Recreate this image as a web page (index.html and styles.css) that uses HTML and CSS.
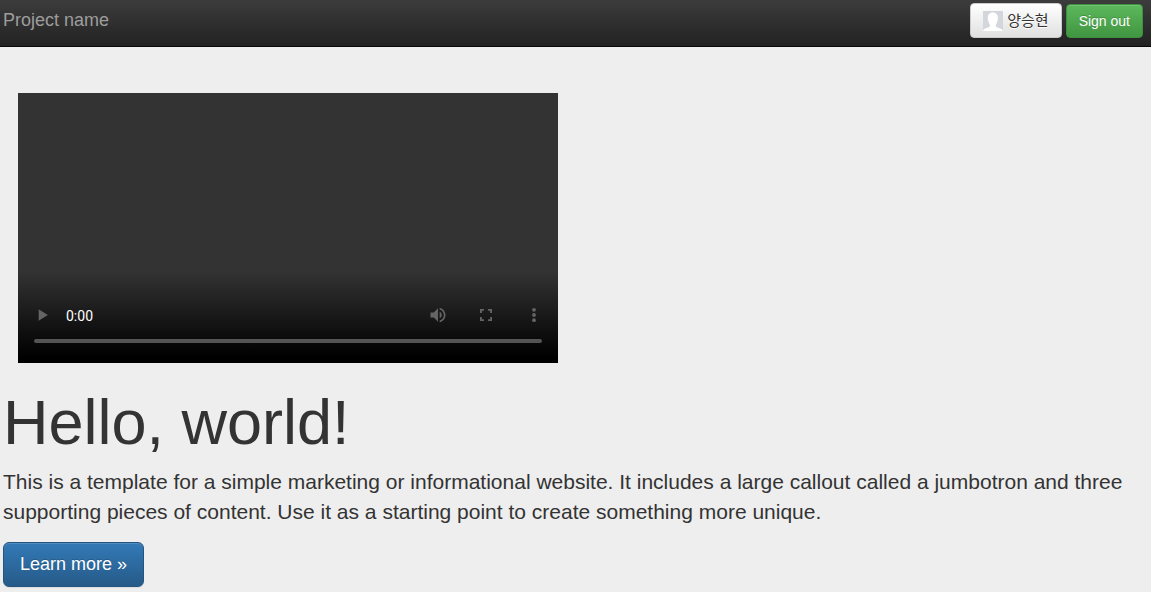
FILE: index.html
```html
<!DOCTYPE html>
<html lang="en">
<head>
<meta charset="utf-8">
<title>Project name</title>
<link rel="stylesheet" href="styles.css">
</head>
<body>
<nav class="navbar">
  <a class="brand" href="#">Project name</a>
  <div class="account">
    <button class="btn btn-user" type="button">
      <svg class="avatar" viewBox="0 0 20 20" aria-hidden="true">
        <rect width="20" height="20" fill="#d3d6db"/>
        <path fill="#fff" d="M0 20c.3-1.500 1.200-2.200 3-2.700 1.700-.5 3.200-.9 3.700-1.700.4-.7.3-1.500 0-2.200-.8-1-1.200-2.100-1.300-3.400C4.800 9.500 4.500 8 4.900 7.300 4.500 3.800 6.200 1.400 9.800 1.400s5.400 2.400 5 5.900c.4.700.1 2.200-.5 2.700-.1 1.300-.5 2.400-1.300 3.400-.3.700-.4 1.500 0 2.200.5.800 2 1.200 3.700 1.700 1.800.5 2.900 1.200 3.200 2.700z"/>
      </svg>
      <span class="user-name" lang="ko">양승현</span>
    </button>
    <button class="btn btn-success" type="button">Sign out</button>
  </div>
</nav>
<main class="jumbotron">
  <section class="player" aria-label="Video player">
    <div class="controls">
      <button class="control" type="button" aria-label="Play">
        <svg viewBox="0 0 24 24"><path d="M8 5v14l11-7z"/></svg>
      </button>
      <span class="time">0:00</span>
      <button class="control" type="button" aria-label="Mute">
        <svg viewBox="0 0 24 24"><path d="M3 9v6h4l5 5V4L7 9H3zm13.500 3c0-1.770-1.020-3.290-2.500-4.030v8.050c1.480-.73 2.500-2.250 2.500-4.020zM14 3.230v2.060c2.890.86 5 3.540 5 6.710s-2.110 5.850-5 6.710v2.060c4.010-.91 7-4.490 7-8.770s-2.990-7.860-7-8.770z"/></svg>
      </button>
      <button class="control" type="button" aria-label="Full screen">
        <svg viewBox="0 0 24 24"><path d="M7 14.500H4.800v4.700h4.700V17H7zM4.800 9.500H7V7h2.500V4.800H4.800zM17 17h-2.500v2.200h4.700v-4.700H17zM14.500 4.800V7H17v2.500h2.200V4.800z"/></svg>
      </button>
      <button class="control" type="button" aria-label="More options">
        <svg viewBox="0 0 24 24"><circle cx="12" cy="5.800" r="2.300"/><circle cx="12" cy="12" r="2.300"/><circle cx="12" cy="18.200" r="2.300"/></svg>
      </button>
    </div>
    <input class="timeline" type="range" min="0" max="100" value="0" disabled aria-label="Seek">
  </section>
  <h1 class="title">Hello, world!</h1>
  <p class="lead">This is a template for a simple marketing or informational website. It includes a large callout called a jumbotron and three supporting pieces of content. Use it as a starting point to create something more unique.</p>
  <a class="btn btn-primary" href="#">Learn more »</a>
</main>
</body>
</html>
```
FILE: styles.css
```css
* {
  box-sizing: border-box;
}

html {
  background: #eee;
}

body {
  margin: 0;
  font: 14px/20px "Liberation Sans", Arial, "Noto Sans CJK KR", sans-serif;
  color: #333;
}

.navbar {
  display: flex;
  justify-content: space-between;
  align-items: flex-start;
  padding: 3px 8px 8px 3px;
  border-bottom: 1px solid #080808;
  background: linear-gradient(#3c3c3c, #222);
}

.brand {
  padding-top: 7px;
  font-size: 18px;
  color: #9d9d9d;
  text-decoration: none;
}

.account {
  display: flex;
  align-items: flex-end;
  gap: 4px;
}

.btn {
  display: inline-flex;
  align-items: center;
  border: 1px solid;
  border-radius: 4px;
  padding: 6px 12px;
  font: inherit;
  color: #fff;
  text-decoration: none;
  text-shadow: 0 -1px 0 rgba(0, 0, 0, 0.2);
  box-shadow: inset 0 1px 0 rgba(255, 255, 255, 0.15), 0 1px 1px rgba(0, 0, 0, 0.075);
  cursor: pointer;
}

.btn-user {
  gap: 4px;
  height: 35px;
  border-color: #ccc;
  background: linear-gradient(#fff, #e0e0e0);
  color: #333;
  text-shadow: 0 1px 0 #fff;
}

.avatar {
  width: 20px;
  height: 20px;
}

.user-name {
  padding-bottom: 2px;
  font-family: "Noto Sans CJK KR", sans-serif;
  font-size: 15px;
  font-weight: 400;
}

.btn-success {
  height: 34px;
  border-color: #3e8f3e;
  background: linear-gradient(#5cb85c, #419641);
}

.btn-primary {
  padding: 10px 16px;
  border-color: #245580;
  border-radius: 6px;
  background: linear-gradient(#337ab7, #265a88);
  font-size: 18px;
  line-height: 23px;
}

.jumbotron {
  padding: 46px 3px 5px;
}

.player {
  display: flex;
  flex-direction: column;
  justify-content: flex-end;
  width: 100%;
  max-width: 540px;
  aspect-ratio: 2 / 1;
  margin-left: 15px;
  padding-bottom: 20px;
  background: linear-gradient(#333 66%, #000 98%);
}

.controls {
  display: flex;
  align-items: center;
}

.control {
  display: flex;
  align-items: center;
  justify-content: center;
  width: 48px;
  height: 48px;
  padding: 0;
  border: 0;
  background: none;
}

.control svg {
  width: 20px;
  height: 20px;
  fill: #646464;
}

.time {
  flex: 1;
  padding-top: 2px;
  font-family: Roboto, sans-serif;
  color: #fff;
}

.timeline {
  appearance: none;
  height: 4px;
  margin: 0 16px;
  border-radius: 2px;
  background: #555;
}

.timeline::-webkit-slider-thumb {
  appearance: none;
  width: 0;
  height: 0;
}

.title {
  margin: 28px 0 13px;
  font-size: 63px;
  font-weight: 500;
  line-height: 63px;
}

.lead {
  margin: 0 0 15px;
  font-size: 21px;
  line-height: 30px;
}
```
